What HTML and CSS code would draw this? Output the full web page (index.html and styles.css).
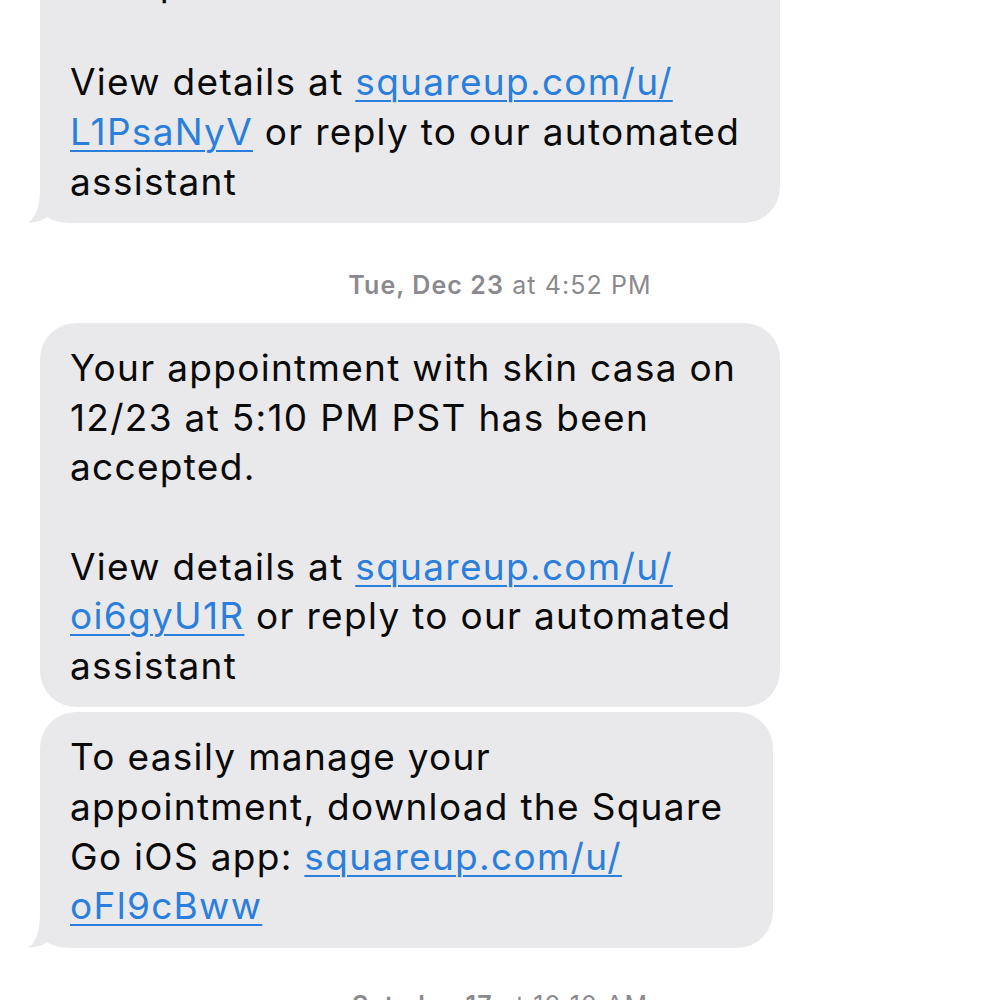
FILE: index.html
```html
<!DOCTYPE html>
<html>
<head>
<meta charset="utf-8">
<link rel="stylesheet" href="styles.css">
</head>
<body>
<div class="thread">
  <div class="bubble tail w740">
    <svg class="tail-svg" width="50" height="36" viewBox="0 0 50 36"><path d="M12 0 C12 20 8 30 0 35.5 C8 36 15 33 19 30 C25 34 32 36 50 36 L50 0 Z"/></svg>
    <p>Your appointment with skin casa on<br>12/23 at 5:10 PM PST has been<br>accepted.</p>
    <p>View details at <a href="#">squareup.com/u/<br>L1PsaNyV</a> or reply to our automated<br>assistant</p>
  </div>
  <div class="stamp"><b>Tue, Dec 23</b> at 4:52 PM</div>
  <div class="bubble w740">
    <p>Your appointment with skin casa on<br>12/23 at 5:10 PM PST has been<br>accepted.</p>
    <p>View details at <a href="#">squareup.com/u/<br>oi6gyU1R</a> or reply to our automated<br>assistant</p>
  </div>
  <div class="bubble tail w733 gap">
    <svg class="tail-svg" width="50" height="36" viewBox="0 0 50 36"><path d="M12 0 C12 20 8 30 0 35.5 C8 36 15 33 19 30 C25 34 32 36 50 36 L50 0 Z"/></svg>
    <p>To easily manage your<br>appointment, download the Square<br>Go iOS app: <a href="#">squareup.com/u/<br>oFl9cBww</a></p>
  </div>
  <div class="stamp stamp-last"><b>Sat, Jan 17</b> at 10:10 AM</div>
</div>
</body>
</html>
```
FILE: styles.css
```css
html, body {
  margin: 0;
  padding: 0;
  background: #ffffff;
  overflow: hidden;
}
.thread {
  display: flex;
  flex-direction: column;
  align-items: flex-start;
  margin-top: -161px;
  padding-left: 40px;
  font-family: "Inter", "Liberation Sans", sans-serif;
}
.bubble {
  position: relative;
  z-index: 0;
  box-sizing: border-box;
  background: #e9e9eb;
  border-radius: 36px;
  padding: 20px 0 17px 30px;
  font-size: 37px;
  line-height: 49.6px;
  color: #0a0a0a;
  white-space: nowrap;
  letter-spacing: 1.3px;
}
.w740 { width: 740px; }
.w733 { width: 733px; }
.gap { margin-top: 5px; }
.bubble p {
  margin: 0;
}
.bubble p + p {
  margin-top: 49.6px;
}
.bubble a {
  color: #2b7fdc;
  text-decoration: underline;
  text-decoration-thickness: 2px;
  text-underline-offset: 5px;
}
.tail-svg {
  position: absolute;
  z-index: -1;
  left: -12px;
  bottom: 0;
  fill: #e9e9eb;
}
.stamp {
  align-self: stretch;
  box-sizing: border-box;
  margin-left: -40px;
  width: 1000px;
  text-align: center;
  font-size: 25px;
  line-height: 30px;
  color: #8a8a8e;
  padding: 47px 0 23px;
  letter-spacing: 1.1px;
}
.stamp b {
  font-weight: 600;
}
.stamp-last {
  padding-top: 42px;
}
```
